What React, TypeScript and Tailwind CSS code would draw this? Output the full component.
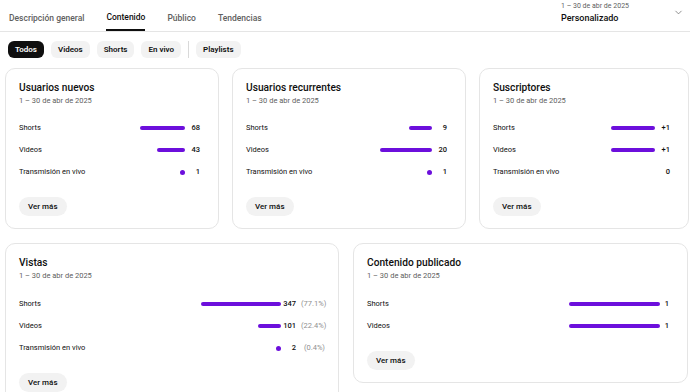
import { ChevronDown } from 'lucide-react';

type Row = { label: string; bar: number; value: string; pct?: string };

const tabs = ['Descripción general', 'Contenido', 'Público', 'Tendencias'];
const chips = ['Todos', 'Videos', 'Shorts', 'En vivo'];

function Bar({ w }: { w: number }) {
  if (w === 0) return null;
  if (w < 6) return <span className="block h-[5px] w-[5px] rounded-full bg-[#6c0fdc]" />;
  return <span className="block h-[4px] rounded-full bg-[#6c0fdc]" style={{ width: w }} />;
}

function Card({
  title,
  rows,
  width,
  pr = 'pr-[18px]',
  valueW = 'w-[15px]',
  gapTop = 'mt-[11px]',
}: {
  title: string;
  rows: Row[];
  width: string;
  pr?: string;
  valueW?: string;
  gapTop?: string;
}) {
  return (
    <div className={`${width} shrink-0 rounded-[10px] border border-[#e5e5e5] bg-white pl-[13px] ${pr} pt-[11px] pb-[12px]`}>
      <h3 className="text-[10.2px] leading-[16px] font-medium text-[#0f0f0f]">{title}</h3>
      <p className="text-[7.5px] leading-[10px] text-[#606060]">1 – 30 de abr de 2025</p>
      <div className={gapTop}>
        {rows.map((r) => (
          <div key={r.label} className="flex h-[22px] items-center text-[7.5px] text-[#0f0f0f]">
            <span className="flex-1">{r.label}</span>
            <Bar w={r.bar} />
            <span className={`${valueW} text-right font-medium`}>{r.value}</span>
            {r.pct && <span className="ml-[5px] w-[24px] text-right text-[#909090]">{r.pct}</span>}
          </div>
        ))}
      </div>
      <button className="mt-[14px] h-[19px] rounded-full bg-[#f2f2f2] px-[9px] text-[8px] font-medium text-[#0f0f0f]">
        Ver más
      </button>
    </div>
  );
}

export default function App() {
  return (
    <div className="h-[392px] w-[690px] overflow-hidden bg-white font-['Roboto',sans-serif] text-[#0f0f0f]">
      <div className="flex h-[32px] items-stretch border-b border-[#e5e5e5] pl-[9px]">
        {tabs.map((t) => (
          <div
            key={t}
            className={`mr-[22px] flex items-center pt-[6px] text-[8.5px] font-medium ${
              t === 'Contenido' ? 'border-b-2 border-[#0f0f0f] text-[#0f0f0f]' : 'text-[#606060]'
            }`}
          >
            {t}
          </div>
        ))}
        <div className="ml-auto flex items-start pt-[1px] pr-[6px]">
          <div className="mr-[44px]">
            <p className="text-[7px] leading-[10px] text-[#606060]">1 – 30 de abr de 2025</p>
            <p className="mt-[1px] text-[9px] leading-[12px] font-medium">Personalizado</p>
          </div>
          <ChevronDown className="mt-[6px] h-[11px] w-[11px] text-[#606060]" strokeWidth={1.5} />
        </div>
      </div>

      <div className="mt-[9px] flex h-[17px] items-center pl-[8px]">
        {chips.map((c) => (
          <span
            key={c}
            className={`mr-[7px] flex h-[17px] items-center rounded-[6px] px-[7px] text-[8px] font-semibold ${
              c === 'Todos' ? 'bg-[#0f0f0f] text-white' : 'bg-[#f2f2f2] text-[#0f0f0f]'
            }`}
          >
            {c}
          </span>
        ))}
        <span className="mr-[7px] h-[17px] w-px bg-[#d9d9d9]" />
        <span className="flex h-[17px] items-center rounded-[6px] bg-[#f2f2f2] px-[7px] text-[8px] font-semibold">Playlists</span>
      </div>

      <div className="mt-[10px] flex items-start gap-[13px] pl-[5px]">
        <Card
          title="Usuarios nuevos"
          width="w-[214px]"
          rows={[
            { label: 'Shorts', bar: 45, value: '68' },
            { label: 'Videos', bar: 28, value: '43' },
            { label: 'Transmisión en vivo', bar: 4, value: '1' },
          ]}
        />
        <Card
          title="Usuarios recurrentes"
          width="w-[234px]"
          rows={[
            { label: 'Shorts', bar: 23, value: '9' },
            { label: 'Videos', bar: 52, value: '20' },
            { label: 'Transmisión en vivo', bar: 4, value: '1' },
          ]}
        />
        <Card
          title="Suscriptores"
          width="w-[210px]"
          rows={[
            { label: 'Shorts', bar: 44, value: '+1' },
            { label: 'Videos', bar: 44, value: '+1' },
            { label: 'Transmisión en vivo', bar: 0, value: '0' },
          ]}
        />
      </div>

      <div className="mt-[14px] flex items-start gap-[14px] pl-[5px]">
        <Card
          title="Vistas"
          width="w-[334px]"
          pr="pr-[13px]"
          gapTop="mt-[12px]"
          rows={[
            { label: 'Shorts', bar: 80, value: '347', pct: '(77.1%)' },
            { label: 'Videos', bar: 23, value: '101', pct: '(22.4%)' },
            { label: 'Transmisión en vivo', bar: 4, value: '2', pct: '(0.4%)' },
          ]}
        />
        <Card
          title="Contenido publicado"
          width="w-[335px]"
          valueW="w-[9px]"
          gapTop="mt-[12px]"
          rows={[
            { label: 'Shorts', bar: 91, value: '1' },
            { label: 'Videos', bar: 91, value: '1' },
          ]}
        />
      </div>
    </div>
  );
}
